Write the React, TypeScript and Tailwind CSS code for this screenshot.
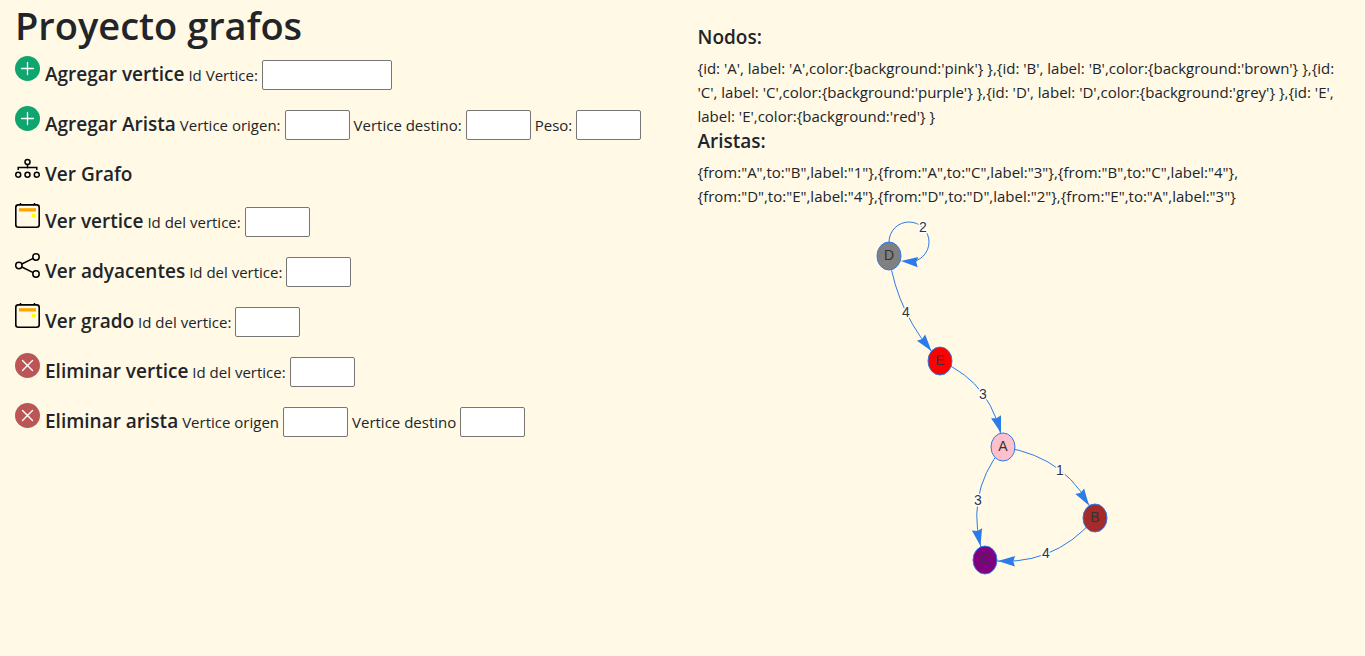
import React from "react";

type Field = { label: string; wide?: boolean };
type Action = { title: string; icon: () => React.ReactElement; fields: Field[] };

const PlusIcon = () => (
  <svg viewBox="0 0 25 25" className="size-[25px]" aria-hidden="true">
    <circle cx="12.5" cy="12.5" r="12.5" fill="#10a56f" />
    <path d="M12.5 6.5v12M6.5 12.5h12" stroke="#fff" strokeWidth="1.3" strokeLinecap="round" />
  </svg>
);

const CrossIcon = () => (
  <svg viewBox="0 0 25 25" className="size-[25px]" aria-hidden="true">
    <circle cx="12.5" cy="12.5" r="12.5" fill="#bc5656" />
    <path d="M7.5 7.5l10 10M17.5 7.5l-10 10" stroke="#fff" strokeWidth="1.4" strokeLinecap="round" />
  </svg>
);

const TreeIcon = () => (
  <svg viewBox="0 0 25 25" className="size-[25px]" fill="none" stroke="#000" strokeWidth="1.5" aria-hidden="true">
    <circle cx="12.5" cy="6" r="2.5" />
    <circle cx="3.2" cy="18.7" r="2.5" />
    <circle cx="12.5" cy="18.7" r="2.5" />
    <circle cx="21.8" cy="18.7" r="2.5" />
    <path d="M12.5 8.5v4M3.2 14v-2.6h18.6V14" />
  </svg>
);

const CalendarIcon = () => (
  <svg viewBox="0 0 25 25" className="size-[25px]" fill="none" aria-hidden="true">
    <rect x="0.8" y="1.9" width="23.4" height="22.3" rx="2.5" stroke="#000" strokeWidth="1.6" />
    <path d="M5.5 0v2M19.5 0v2" stroke="#000" strokeWidth="1.5" />
    <path d="M4 5.2h17v3.3H4z" fill="#ffa500" />
    <path d="M17 11h3.4v3.2H17z" fill="#ff0" />
  </svg>
);

const ShareIcon = () => (
  <svg viewBox="0 0 25 25" className="size-[25px]" fill="none" stroke="#000" strokeWidth="1.5" aria-hidden="true">
    <circle cx="3.9" cy="12.5" r="3.2" />
    <circle cx="21" cy="4" r="3.2" />
    <circle cx="21" cy="21" r="3.2" />
    <path d="M6.8 11l11.4-5.6M6.8 14l11.4 5.6" />
  </svg>
);

const actions: Action[] = [
  { title: "Agregar vertice", icon: PlusIcon, fields: [{ label: "Id Vertice:", wide: true }] },
  {
    title: "Agregar Arista",
    icon: PlusIcon,
    fields: [{ label: "Vertice origen:" }, { label: "Vertice destino:" }, { label: "Peso:" }],
  },
  { title: "Ver Grafo", icon: TreeIcon, fields: [] },
  { title: "Ver vertice", icon: CalendarIcon, fields: [{ label: "Id del vertice:" }] },
  { title: "Ver adyacentes", icon: ShareIcon, fields: [{ label: "Id del vertice:" }] },
  { title: "Ver grado", icon: CalendarIcon, fields: [{ label: "Id del vertice:" }] },
  { title: "Eliminar vertice", icon: CrossIcon, fields: [{ label: "Id del vertice:" }] },
  { title: "Eliminar arista", icon: CrossIcon, fields: [{ label: "Vertice origen" }, { label: "Vertice destino" }] },
];

const nodeLines = [
  "{id: 'A', label: 'A',color:{background:'pink'} },{id: 'B', label: 'B',color:{background:'brown'} },{id:",
  "'C', label: 'C',color:{background:'purple'} },{id: 'D', label: 'D',color:{background:'grey'} },{id: 'E',",
  "label: 'E',color:{background:'red'} }",
];

const edgeLines = [
  '{from:"A",to:"B",label:"1"},{from:"A",to:"C",label:"3"},{from:"B",to:"C",label:"4"},',
  '{from:"D",to:"E",label:"4"},{from:"D",to:"D",label:"2"},{from:"E",to:"A",label:"3"}',
];

const nodes = [
  { id: "D", x: 889, y: 256, fill: "grey" },
  { id: "E", x: 940, y: 361, fill: "red" },
  { id: "A", x: 1003, y: 447, fill: "pink" },
  { id: "B", x: 1095, y: 518, fill: "brown" },
  { id: "C", x: 985, y: 560, fill: "purple" },
];

const edges = [
  { d: "M889 242a20 20 0 1 1 20 20", label: "2", lx: 923, ly: 227, tx: 901, ty: 261, angle: 184 },
  { d: "M889 256Q897.5 315.5 940 361", label: "4", lx: 906, ly: 312, tx: 931.5, ty: 351, angle: 52 },
  { d: "M940 361Q994.5 384 1003 447", label: "3", lx: 983, ly: 394, tx: 1001, ty: 433, angle: 73 },
  { d: "M1003 447Q1071 457.5 1095 518", label: "1", lx: 1060, ly: 470, tx: 1089, ty: 505.5, angle: 57 },
  { d: "M1003 447Q962 496.5 985 560", label: "3", lx: 978, ly: 500, tx: 980.5, ty: 546, angle: 78 },
  { d: "M1095 518Q1052 569 985 560", label: "4", lx: 1046, ly: 553, tx: 998, ty: 561, angle: 181 },
];

function Graph() {
  return (
    <svg
      viewBox="698 208 652.5 400"
      className="block w-full font-['Liberation_Sans',sans-serif] text-[14px]"
      role="img"
      aria-label="Grafo"
      textAnchor="middle"
    >
      {edges.map((e) => (
        <g key={e.d}>
          <path d={e.d} fill="none" stroke="#2b7ce9" />
          <path
            d="M0 0L-17 5.2L-15.3 0L-17 -5.2Z"
            fill="#2b7ce9"
            transform={`translate(${e.tx} ${e.ty}) rotate(${e.angle})`}
          />
          <text
            x={e.lx}
            y={e.ly + 5}
            fill="#343434"
            stroke="#fff"
            strokeWidth="3"
            strokeLinejoin="round"
            paintOrder="stroke"
          >
            {e.label}
          </text>
        </g>
      ))}
      {nodes.map((n) => (
        <g key={n.id}>
          <ellipse cx={n.x} cy={n.y} rx="12" ry="14" fill={n.fill} stroke="#2b7ce9" />
          <text x={n.x} y={n.y + 4} fill="#343434">
            {n.id}
          </text>
        </g>
      ))}
    </svg>
  );
}

function ActionRow({ title, icon: Icon, fields }: Action) {
  return (
    <div className={`flex items-start gap-1 ${fields.length ? "h-[50px]" : "h-[47px]"}`}>
      <button type="button" aria-label={title} className="mr-px shrink-0">
        <Icon />
      </button>
      <h5 className="mt-1 text-[19px] leading-[28px] font-semibold whitespace-nowrap">{title}</h5>
      {fields.map((f) => (
        <label key={f.label} className="mt-1 flex items-center gap-1 text-[15px] leading-[30px] whitespace-nowrap">
          {f.label}
          <input
            type="text"
            className={`h-[30px] rounded-xs border border-[#767676] bg-white px-1 ${f.wide ? "w-[130px]" : "w-[65px]"}`}
          />
        </label>
      ))}
    </div>
  );
}

export default function App() {
  return (
    <main className="grid min-h-screen grid-cols-2 bg-[#fff9e6] font-['Open_Sans',sans-serif] text-[#212529]">
      <section className="px-[15px]">
        <h1 className="mb-1.5 text-[38px] leading-[50px] font-semibold">Proyecto grafos</h1>
        {actions.map((a) => (
          <ActionRow key={a.title} {...a} />
        ))}
      </section>
      <section className="px-[15px] pt-6">
        <h5 className="mb-1.5 text-[19px] leading-[26px] font-semibold">Nodos:</h5>
        <p className="text-[15px] leading-6">
          {nodeLines.map((l) => (
            <span key={l} className="block whitespace-nowrap">{l}</span>
          ))}
        </p>
        <h5 className="mb-1.5 text-[19px] leading-[26px] font-semibold">Aristas:</h5>
        <p className="text-[15px] leading-6">
          {edgeLines.map((l) => (
            <span key={l} className="block whitespace-nowrap">{l}</span>
          ))}
        </p>
        <Graph />
      </section>
    </main>
  );
}
